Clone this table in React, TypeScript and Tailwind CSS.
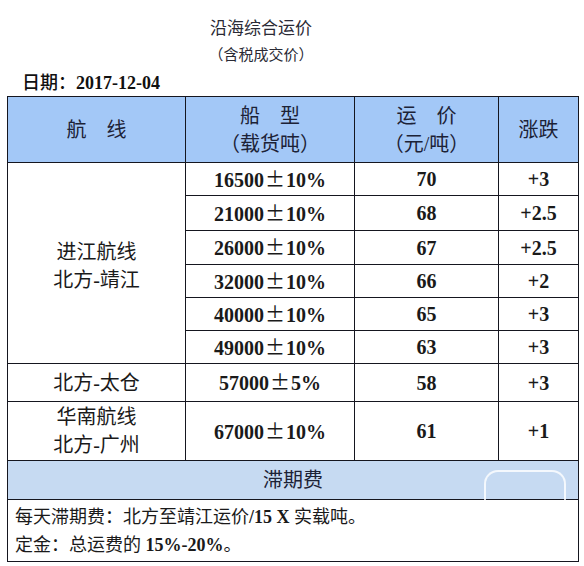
import React from "react";

const FONT = { fontFamily: '"Liberation Serif", "Noto Sans CJK SC", serif' };
const CJK = { fontFamily: '"Noto Sans CJK SC", sans-serif' };

const rows = [
  { a: "16500", b: "10%", p: "70", c: "+3", h: "h-[33px]" },
  { a: "21000", b: "10%", p: "68", c: "+2.5", h: "h-[35px]" },
  { a: "26000", b: "10%", p: "67", c: "+2.5", h: "h-[34px]" },
  { a: "32000", b: "10%", p: "66", c: "+2", h: "h-[33px]" },
  { a: "40000", b: "10%", p: "65", c: "+3", h: "h-[33px]" },
  { a: "49000", b: "10%", p: "63", c: "+3", h: "h-[33px]" },
];

const bd = "border border-[#15161f]";

function Ton({ a, b }: { a: string; b: string }) {
  return (
    <span>
      {a}
      <span className="font-normal mx-[1px]" style={CJK}>±</span>
      {b}
    </span>
  );
}

export default function App() {
  return (
    <div className="w-[584px] h-[566px] bg-white text-[#1a1a1a] overflow-hidden" style={FONT}>
      <div className="pt-[16px]">
        <div className="w-[522px] h-[26px] leading-[26px] text-center text-[17px] text-[#2a2a35]">沿海综合运价</div>
        <div className="w-[522px] h-[26px] leading-[26px] text-center text-[15px] text-[#2a2a35]">（含税成交价）</div>
        <div className="mt-[2px] h-[26px] leading-[26px] pl-[22px] text-[18px] text-[#111]">
          <span className="font-medium">日期：</span>
          <b>2017-12-04</b>
        </div>
      </div>
      <div className="relative ml-[7px]">
        <table className="table-fixed border-collapse w-[571px] text-center">
          <colgroup>
            <col className="w-[178px]" />
            <col className="w-[169px]" />
            <col className="w-[144px]" />
            <col className="w-[80px]" />
          </colgroup>
          <thead>
            <tr className="h-[66px] bg-[#a3c8f7] text-[20px] text-[#1c2236] leading-[28px]">
              <th className={`${bd} font-normal p-0`}>航　线</th>
              <th className={`${bd} font-normal p-0`}>
                <div>船　型</div>
                <div>（载货吨）</div>
              </th>
              <th className={`${bd} font-normal p-0`}>
                <div>运　价</div>
                <div>（元/吨）</div>
              </th>
              <th className={`${bd} font-normal p-0`}>涨跌</th>
            </tr>
          </thead>
          <tbody className="text-[20px]">
            {rows.map((r, i) => (
              <tr key={r.a} className={r.h}>
                {i === 0 && (
                  <td rowSpan={6} className={`${bd} p-0 leading-[28px] pt-[6px]`}>
                    <div>进江航线</div>
                    <div>北方-靖江</div>
                  </td>
                )}
                <td className={`${bd} p-0 font-bold`}>
                  <Ton a={r.a} b={r.b} />
                </td>
                <td className={`${bd} p-0 font-bold`}>{r.p}</td>
                <td className={`${bd} p-0 font-bold`}>{r.c}</td>
              </tr>
            ))}
            <tr className="h-[38px]">
              <td className={`${bd} p-0`}>北方-太仓</td>
              <td className={`${bd} p-0 font-bold`}>
                <Ton a="57000" b="5%" />
              </td>
              <td className={`${bd} p-0 font-bold`}>58</td>
              <td className={`${bd} p-0 font-bold`}>+3</td>
            </tr>
            <tr className="h-[59px]">
              <td className={`${bd} p-0 leading-[28px]`}>
                <div>华南航线</div>
                <div>北方-广州</div>
              </td>
              <td className={`${bd} p-0 font-bold`}>
                <Ton a="67000" b="10%" />
              </td>
              <td className={`${bd} p-0 font-bold`}>61</td>
              <td className={`${bd} p-0 font-bold`}>+1</td>
            </tr>
            <tr className="h-[39px] bg-[#c6daf2]">
              <td colSpan={4} className={`${bd} p-0 text-[#1c2236] relative`}>
                滞期费
                <div className="absolute right-[12px] top-[9px] w-[82px] h-[30px] rounded-t-[14px] border-[2px] border-b-0 border-white/80" />
              </td>
            </tr>
            <tr className="h-[62px]">
              <td colSpan={4} className={`${bd} p-0 text-left pl-[7px] text-[18px] leading-[28px]`}>
                <div>每天滞期费：北方至靖江运价<b>/15 X</b> 实载吨。</div>
                <div>定金：总运费的 <b>15%-20%</b>。</div>
              </td>
            </tr>
          </tbody>
        </table>
      </div>
    </div>
  );
}
